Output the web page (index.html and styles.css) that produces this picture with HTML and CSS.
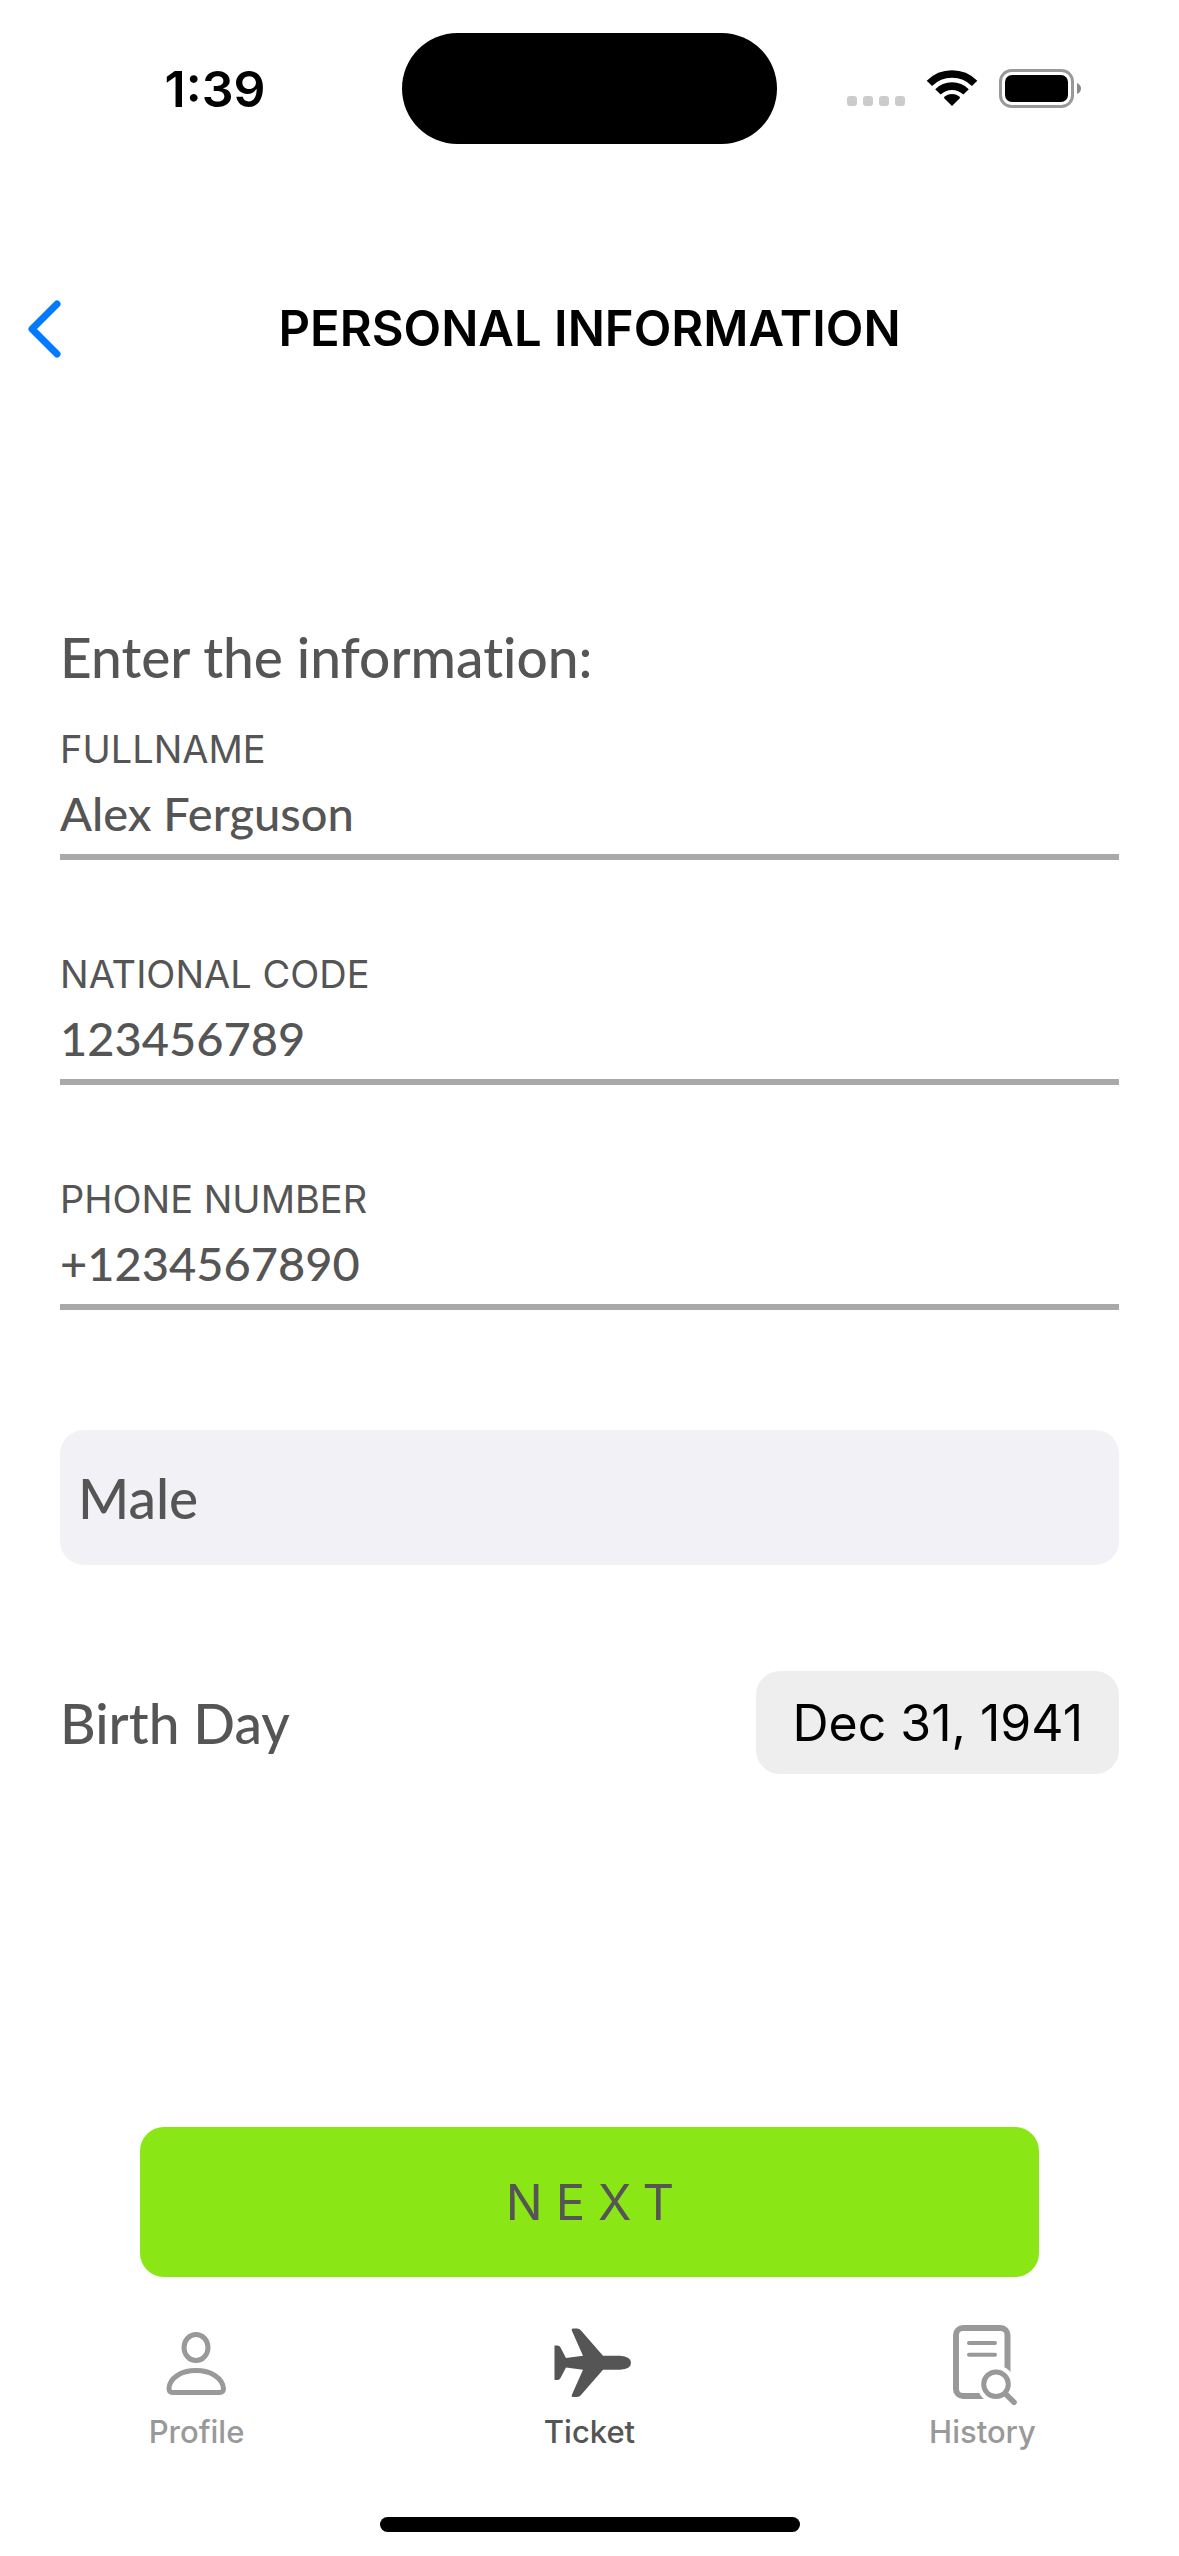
FILE: index.html
```html
<!DOCTYPE html>
<html lang="en">
<head>
  <meta charset="utf-8">
  <meta name="viewport" content="width=device-width, initial-scale=1">
  <title>Personal Information</title>
  <link rel="stylesheet" href="styles.css">
</head>
<body>
  <div class="screen">
    <div class="status">
      <span class="status-time">1:39</span>
      <span class="status-island"></span>
      <span class="status-icons">
        <svg width="58" height="38" viewBox="0 0 58 38" fill="#cbcbcb" aria-hidden="true">
          <rect x="0" y="26" width="10" height="10" rx="3"/>
          <rect x="16" y="26" width="10" height="10" rx="3"/>
          <rect x="32" y="26" width="10" height="10" rx="3"/>
          <rect x="48" y="26" width="10" height="10" rx="3"/>
        </svg>
        <svg width="52" height="38" viewBox="0 0 52 38" aria-hidden="true">
          <path d="M3.400 13.400a32 32 0 0 1 45.200 0M11.900 21.900a20 20 0 0 1 28.200 0" fill="none" stroke="#000" stroke-width="7.600"/>
          <path d="M26 36l-8-8q0-1 1-1.700a12 12 0 0 1 14 0q1 .7 1 1.700z"/>
        </svg>
        <svg width="83" height="40" viewBox="0 0 83 40" aria-hidden="true">
          <rect x="1.500" y="1.500" width="72" height="36" rx="11" fill="none" stroke="#999" stroke-width="3"/>
          <rect x="6" y="6" width="63" height="27" rx="7"/>
          <path d="M78 14q4 2 4 5.500t-4 5.500z" fill="#888"/>
        </svg>
      </span>
    </div>

    <header class="nav">
      <a class="nav-back" href="#back" aria-label="Back">
        <svg width="36" height="58" viewBox="0 0 36 58" fill="none" stroke="#007aff" stroke-width="7" stroke-linecap="round" stroke-linejoin="round" aria-hidden="true">
          <path d="M30 4L5 29l25 25"/>
        </svg>
      </a>
      <h1 class="nav-title">PERSONAL INFORMATION</h1>
    </header>

    <main class="form">
      <h2 class="form-heading">Enter the information:</h2>
      <div class="field">
        <label class="field-label" for="fullname">FULLNAME</label>
        <input class="field-input" id="fullname" type="text" value="Alex Ferguson">
      </div>
      <div class="field">
        <label class="field-label" for="code">NATIONAL CODE</label>
        <input class="field-input" id="code" type="text" value="123456789">
      </div>
      <div class="field">
        <label class="field-label" for="phone">PHONE NUMBER</label>
        <input class="field-input" id="phone" type="tel" value="+1234567890">
      </div>
      <select class="gender" aria-label="Gender">
        <option selected>Male</option>
        <option>Female</option>
      </select>
      <div class="birth">
        <label class="birth-label" for="birthday">Birth Day</label>
        <button class="birth-date" id="birthday" type="button">Dec 31, 1941</button>
      </div>
      <button class="next" type="submit">NEXT</button>
    </main>

    <nav class="tabs">
      <a class="tab" href="#profile">
        <svg width="84" height="84" viewBox="0 0 84 84" fill="none" stroke="currentColor" stroke-width="5" aria-hidden="true">
          <ellipse cx="41" cy="25.500" rx="12" ry="13"/>
          <path d="M17.500 70.500h47q4 0 4-4C67.500 56 56 48.500 41 48.500S14.500 56 14 66.500q0 4 3.500 4z"/>
        </svg>
        <span>Profile</span>
      </a>
      <a class="tab tab-active" href="#ticket" aria-current="page">
        <svg width="84" height="84" viewBox="0 0 84 84" fill="currentColor" aria-hidden="true">
          <path d="M55 33.700H72Q83 34.500 83 40.700T72 47.700H55L33 73Q31.500 75 29 75H25Q23 75 24 72.500L35 47.700 18 45.500 12.500 56Q11.500 58 9.500 58H6.500V23.500H9.500Q11.500 23.500 12.500 25.500L18 36 35 33.700 24 9Q23 6.500 25 6.500H29Q31.500 6.500 33 8.500Z"/>
        </svg>
        <span>Ticket</span>
      </a>
      <a class="tab" href="#history">
        <svg width="84" height="84" viewBox="0 0 84 84" fill="none" stroke="currentColor" stroke-linecap="round" aria-hidden="true">
          <rect x="15" y="6" width="51.500" height="68" rx="7" stroke-width="6"/>
          <path d="M28 21h26M28 32.700h26" stroke-width="4"/>
          <circle cx="55" cy="62.300" r="19" fill="#fff" stroke="none"/>
          <circle cx="55" cy="62.300" r="12.300" stroke-width="5"/>
          <path d="M65 72.300l8 8" stroke-width="5.500"/>
        </svg>
        <span>History</span>
      </a>
    </nav>
    <div class="home-bar"></div>
  </div>
</body>
</html>
```

FILE: styles.css
```css
* {
  box-sizing: border-box;
}

body {
  margin: 0;
  background: #fff;
  color: #555;
  font-family: Inter, "Liberation Sans", sans-serif;
}

.screen {
  display: flex;
  flex-direction: column;
  min-height: 100vh;
}

/* Status bar */
.status {
  display: grid;
  grid-template-columns: 1fr 375px 1fr;
  align-items: center;
  height: 177px;
  color: #000;
}

.status-time {
  padding-left: 28px;
  font-size: 50px;
  font-weight: 600;
  line-height: 60px;
  text-align: center;
}

.status-island {
  height: 111px;
  border-radius: 56px;
  background: #000;
}

.status-icons {
  display: flex;
  align-items: center;
  justify-content: flex-end;
  gap: 21px;
  padding-right: 97px;
}

/* Title bar */
.nav {
  display: grid;
  grid-template-columns: 120px 1fr 120px;
  align-items: center;
  height: 132px;
  margin-top: 86px;
  color: #000;
}

.nav-back {
  padding-left: 27px;
}

.nav svg,
.tab svg {
  display: block;
}

.nav-title {
  margin: 0;
  font-size: 49px;
  font-weight: 600;
  line-height: 60px;
  text-align: center;
}

/* Form */
.form {
  display: flex;
  flex: 1;
  flex-direction: column;
  padding: 226px 60px 0;
}

.form-heading,
.field-input,
.gender,
.birth-label {
  color: #555;
  font-family: Lato, "Liberation Sans", sans-serif;
  font-weight: 500;
  font-variant-ligatures: none;
}

.form-heading,
.gender,
.birth-label {
  font-size: 55px;
  line-height: 72px;
}

.form-heading {
  margin: 0 0 27px;
}

.field {
  display: flex;
  flex-direction: column;
  height: 140px;
  margin-bottom: 85px;
}

.field-label {
  font-size: 38px;
  line-height: 58px;
}

.field-input {
  flex: 1;
  width: 100%;
  padding: 0 0 6px;
  border: 0;
  border-bottom: 6px solid #a9a9a9;
  border-radius: 0;
  background: none;
  font-size: 47px;
}

.gender {
  appearance: none;
  height: 135px;
  margin-top: 35px;
  padding: 0 18px;
  border: 0;
  border-radius: 24px;
  background: #f2f1f6;
}

.birth {
  display: flex;
  align-items: center;
  justify-content: space-between;
  margin-top: 106px;
}

.birth-date {
  height: 103px;
  padding: 0 36px;
  border: 0;
  border-radius: 24px;
  background: #eee;
  color: #000;
  font-family: inherit;
  font-size: 50px;
}

.next {
  height: 150px;
  margin: auto 80px 0;
  padding: 0 0 0 14px;
  border: 0;
  border-radius: 24px;
  background: #8ae715;
  color: #555;
  font-family: inherit;
  font-size: 49px;
  letter-spacing: 13px;
}

/* Tab bar */
.tabs {
  display: grid;
  grid-template-columns: repeat(3, 1fr);
  margin-top: 45px;
}

.tab {
  display: flex;
  flex-direction: column;
  align-items: center;
  gap: 8px;
  color: #999;
  font-size: 31px;
  font-weight: 500;
  line-height: 36px;
  text-decoration: none;
}

.tab-active {
  color: #555;
}

.home-bar {
  width: 420px;
  height: 15px;
  margin: 67px auto 24px;
  border-radius: 8px;
  background: #000;
}
```
